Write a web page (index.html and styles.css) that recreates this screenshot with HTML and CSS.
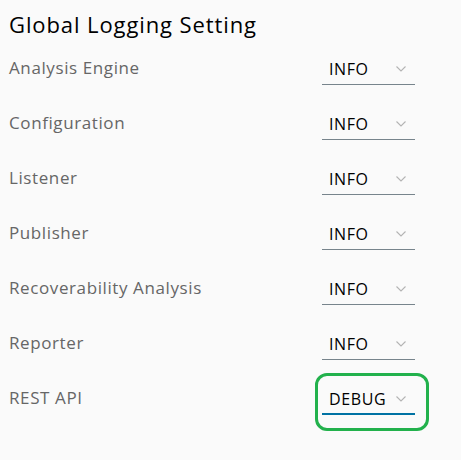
FILE: index.html
```html
<!DOCTYPE html>
<html>
<head>
<meta charset="utf-8">
<link rel="stylesheet" href="styles.css">
</head>
<body>
<div class="panel">
  <h2 class="title">Global Logging Setting</h2>
  <div class="rows">
    <div class="row"><span class="label">Analysis Engine</span><div class="select"><span class="value">INFO</span><svg class="chev" viewBox="0 0 10 6"><path d="M0.5 0.5 L5 5 L9.5 0.5" /></svg></div></div>
    <div class="row"><span class="label">Configuration</span><div class="select"><span class="value">INFO</span><svg class="chev" viewBox="0 0 10 6"><path d="M0.5 0.5 L5 5 L9.5 0.5" /></svg></div></div>
    <div class="row"><span class="label">Listener</span><div class="select"><span class="value">INFO</span><svg class="chev" viewBox="0 0 10 6"><path d="M0.5 0.5 L5 5 L9.5 0.5" /></svg></div></div>
    <div class="row"><span class="label">Publisher</span><div class="select"><span class="value">INFO</span><svg class="chev" viewBox="0 0 10 6"><path d="M0.5 0.5 L5 5 L9.5 0.5" /></svg></div></div>
    <div class="row"><span class="label">Recoverability Analysis</span><div class="select"><span class="value">INFO</span><svg class="chev" viewBox="0 0 10 6"><path d="M0.5 0.5 L5 5 L9.5 0.5" /></svg></div></div>
    <div class="row"><span class="label">Reporter</span><div class="select"><span class="value">INFO</span><svg class="chev" viewBox="0 0 10 6"><path d="M0.5 0.5 L5 5 L9.5 0.5" /></svg></div></div>
    <div class="row"><span class="label">REST API</span><div class="select-wrap"><div class="select active"><span class="value">DEBUG</span><svg class="chev" viewBox="0 0 10 6"><path d="M0.5 0.5 L5 5 L9.5 0.5" /></svg></div><div class="highlight"></div></div></div>
  </div>
</div>
</body>
</html>
```

FILE: styles.css
```css
html, body {
  margin: 0;
  padding: 0;
  background: #fafafa;
}
body {
  font-family: "Open Sans", "Noto Sans", sans-serif;
  width: 461px;
  height: 460px;
  overflow: hidden;
}
.panel {
  padding-left: 9px;
}
.title {
  margin: 0;
  height: 42px;
  box-sizing: border-box;
  padding-top: 9px;
  font-size: 22px;
  line-height: 30px;
  font-weight: 400;
  letter-spacing: 0.9px;
  color: #000;
}
.rows {
  display: flex;
  flex-direction: column;
}
.row {
  height: 55px;
  display: grid;
  grid-template-columns: 313px 93px;
  align-items: center;
}
.label {
  font-size: 17px;
  color: #666;
  line-height: 24px;
  letter-spacing: 0.6px;
  margin-top: -4px;
}
.select-wrap {
  position: relative;
}
.select {
  height: 29px;
  border-bottom: 1px solid #77848c;
  display: flex;
  align-items: center;
  justify-content: space-between;
  padding: 0 9px 0 7px;
}
.select.active {
  border-bottom: 2px solid #0072a3;
  height: 28px;
}
.value {
  font-size: 16px;
  color: #000;
  line-height: 20px;
  letter-spacing: 0.6px;
}
.chev {
  width: 10px;
  height: 6px;
  fill: none;
  stroke: #b3b3b3;
  stroke-width: 1.1;
}
.highlight {
  position: absolute;
  left: -7px;
  top: -12px;
  width: 114px;
  height: 58px;
  box-sizing: border-box;
  border: 3px solid #22b14c;
  border-radius: 12px;
}
```
